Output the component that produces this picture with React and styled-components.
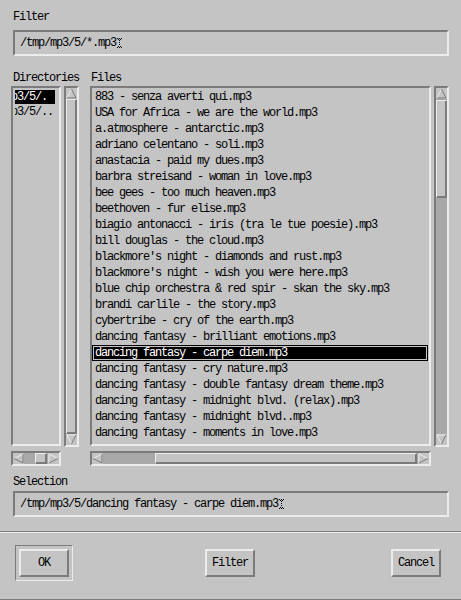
import React from "react";
import styled, { createGlobalStyle } from "styled-components";

const GRAY = "#c4c4c4";
const DARK = "#7b7b7b";
const LIGHT = "#ececec";
const TROUGH = "#a8a8a8";

const GlobalStyle = createGlobalStyle`
  html, body {
    margin: 0;
    padding: 0;
    background: ${GRAY};
  }
  body {
    font-family: "Liberation Mono", "DejaVu Sans Mono", monospace;
    font-size: 12px;
    letter-spacing: -1.2px;
    color: #000;
  }
`;

const Window = styled.div`
  width: 461px;
  height: 600px;
  box-sizing: border-box;
  display: flex;
  flex-direction: column;
  background: ${GRAY};
  overflow: hidden;
`;

const Top = styled.div`
  padding: 9px 12px 0 13px;
`;

const Label = styled.div`
  height: 16px;
  line-height: 16px;
  padding-left: ${(p) => p.$indent || 0}px;
  margin-top: ${(p) => p.$top || 0}px;
  white-space: nowrap;
`;

const Field = styled.div`
  height: 26px;
  box-sizing: border-box;
  margin-top: ${(p) => p.$gap || 0}px;
  border: 2px solid;
  border-color: ${DARK} ${LIGHT} ${LIGHT} ${DARK};
  padding-left: 5px;
  line-height: 22px;
  white-space: nowrap;
  display: flex;
  align-items: center;
`;

const Panels = styled.div`
  display: grid;
  grid-template-columns: 68px 359px;
  column-gap: 11px;
  padding: 14px 0 0 11px;
`;

const Panel = styled.div`
  display: grid;
  grid-template-columns: 1fr 15px;
  grid-template-rows: 16px 361px 15px;
  column-gap: 3px;
  & > ${Label} {
    grid-column: 1 / 3;
  }
`;

const List = styled.div`
  box-sizing: border-box;
  height: 360px;
  border: 2px solid;
  border-color: ${DARK} ${LIGHT} ${LIGHT} ${DARK};
  padding-top: 1px;
  overflow: hidden;
`;

const FileRow = styled.div`
  height: 16px;
  line-height: 16px;
  padding-left: 3px;
  margin-right: 1px;
  white-space: nowrap;
  overflow: hidden;
  ${(p) =>
    p.$selected &&
    `
    background: #000;
    color: #fff;
    box-shadow: inset 0 0 0 1px #000, inset 0 0 0 2px ${GRAY};
  `}
`;

const DirRow = styled.div`
  height: 14px;
  line-height: 14px;
  margin: 1px 4px 1px 2px;
  white-space: nowrap;
  overflow: hidden;
  ${(p) => p.$selected && `background: #000; color: #fff;`}
`;

const DirText = styled.span`
  display: inline-block;
  margin-left: -40px;
`;

const HScrollSlot = styled.div`
  grid-column: 1 / 2;
  margin-top: 4px;
`;

/* ---------- scrollbars ---------- */

const Trough = styled.div`
  box-sizing: border-box;
  width: ${(p) => (p.$vertical ? "15px" : "auto")};
  height: ${(p) => (p.$vertical ? "361px" : "15px")};
  border: 2px solid;
  border-color: ${DARK} ${LIGHT} ${LIGHT} ${DARK};
  background: ${TROUGH};
  display: flex;
  flex-direction: ${(p) => (p.$vertical ? "column" : "row")};
`;

const Track = styled.div`
  flex: 1;
  display: flex;
  flex-direction: ${(p) => (p.$vertical ? "column" : "row")};
`;

const Thumb = styled.div`
  box-sizing: border-box;
  flex: ${(p) => (p.$fill ? 1 : "none")};
  ${(p) =>
    p.$vertical
      ? `margin-top: ${p.$start}px; height: ${p.$fill ? "auto" : p.$size + "px"};`
      : `margin-left: ${p.$start}px; width: ${p.$fill ? "auto" : p.$size + "px"};`}
  background: ${GRAY};
  border: 1px solid;
  border-color: ${LIGHT} ${DARK} ${DARK} ${LIGHT};
  box-shadow: inset -1px -1px 0 ${DARK};
`;

const ArrowBox = styled.svg`
  flex: none;
  display: block;
  background: ${GRAY};
`;

const Arrow = ({ dir }) => {
  const pts = {
    up: [[5.5, 1], [10, 10], [1, 10]],
    down: [[1, 1], [10, 1], [5.5, 10]],
    left: [[1, 5.5], [10, 1], [10, 10]],
    right: [[1, 1], [10, 5.5], [1, 10]],
  }[dir];
  const p = pts.map((q) => q.join(",")).join(" ");
  return (
    <ArrowBox width={11} height={11} viewBox="0 0 11 11">
      <polygon points={p} fill={GRAY} />
      {dir === "up" && (
        <>
          <line x1="5.5" y1="1" x2="1" y2="10" stroke={LIGHT} />
          <line x1="5.5" y1="1" x2="10" y2="10" stroke={DARK} />
          <line x1="1" y1="10" x2="10" y2="10" stroke={DARK} />
        </>
      )}
      {dir === "down" && (
        <>
          <line x1="1" y1="1" x2="10" y2="1" stroke={LIGHT} />
          <line x1="1" y1="1" x2="5.5" y2="10" stroke={LIGHT} />
          <line x1="10" y1="1" x2="5.5" y2="10" stroke={DARK} />
        </>
      )}
      {dir === "left" && (
        <>
          <line x1="1" y1="5.5" x2="10" y2="1" stroke={LIGHT} />
          <line x1="1" y1="5.5" x2="10" y2="10" stroke={DARK} />
          <line x1="10" y1="1" x2="10" y2="10" stroke={DARK} />
        </>
      )}
      {dir === "right" && (
        <>
          <line x1="1" y1="1" x2="1" y2="10" stroke={LIGHT} />
          <line x1="1" y1="1" x2="10" y2="5.5" stroke={LIGHT} />
          <line x1="1" y1="10" x2="10" y2="5.5" stroke={DARK} />
        </>
      )}
    </ArrowBox>
  );
};

const ScrollBar = ({ vertical, start = 0, size = 0, fill }) => (
  <Trough $vertical={vertical}>
    <Arrow dir={vertical ? "up" : "left"} />
    <Track $vertical={vertical}>
      <Thumb $vertical={vertical} $start={start} $size={size} $fill={fill} />
    </Track>
    <Arrow dir={vertical ? "down" : "right"} />
  </Trough>
);

/* ---------- caret ---------- */

const CaretSvg = styled.svg`
  display: inline-block;
  margin-left: 1px;
  vertical-align: middle;
`;

const Caret = () => (
  <CaretSvg width="6" height="12" viewBox="0 0 6 12">
    <g fill="#000">
      <rect x="0" y="1" width="1" height="1" />
      <rect x="2" y="1" width="1" height="1" />
      <rect x="4" y="1" width="1" height="1" />
      <rect x="1" y="2" width="1" height="1" />
      <rect x="3" y="2" width="1" height="1" />
      <rect x="2" y="3" width="1" height="1" />
      <rect x="2" y="5" width="1" height="1" />
      <rect x="2" y="7" width="1" height="1" />
      <rect x="1" y="9" width="1" height="1" />
      <rect x="3" y="9" width="1" height="1" />
      <rect x="0" y="10" width="1" height="1" />
      <rect x="2" y="10" width="1" height="1" />
      <rect x="4" y="10" width="1" height="1" />
    </g>
  </CaretSvg>
);

/* ---------- bottom area ---------- */

const Bottom = styled.div`
  padding: 0 12px 0 13px;
`;

const Separator = styled.div`
  margin-top: 14px;
  height: 1px;
  background: ${DARK};
  border-bottom: 1px solid ${LIGHT};
`;

const ButtonBar = styled.div`
  flex: 1;
  display: flex;
  justify-content: space-between;
  align-items: flex-start;
  padding: 12px 16px 0 15px;
  border-left: 1px solid ${DARK};
  border-bottom: 1px solid ${DARK};
  margin-left: -1px;
`;

const ButtonSlot = styled.div`
  box-sizing: border-box;
  width: 58px;
  height: 36px;
  padding: 3px;
  border: 1px solid;
  border-color: ${(p) =>
    p.$default ? `${DARK} ${LIGHT} ${LIGHT} ${DARK}` : "transparent"};
`;

const Button = styled.button`
  box-sizing: border-box;
  width: 50px;
  height: 28px;
  margin: 0;
  padding: 0;
  background: ${GRAY};
  border: 2px solid;
  border-color: ${LIGHT} ${DARK} ${DARK} ${LIGHT};
  font: inherit;
  letter-spacing: inherit;
  color: #000;
`;

const files = [
  "883 - senza averti qui.mp3",
  "USA for Africa - we are the world.mp3",
  "a.atmosphere - antarctic.mp3",
  "adriano celentano - soli.mp3",
  "anastacia - paid my dues.mp3",
  "barbra streisand - woman in love.mp3",
  "bee gees - too much heaven.mp3",
  "beethoven - fur elise.mp3",
  "biagio antonacci - iris (tra le tue poesie).mp3",
  "bill douglas - the cloud.mp3",
  "blackmore's night - diamonds and rust.mp3",
  "blackmore's night - wish you were here.mp3",
  "blue chip orchestra & red spir - skan the sky.mp3",
  "brandi carlile - the story.mp3",
  "cybertribe - cry of the earth.mp3",
  "dancing fantasy - brilliant emotions.mp3",
  "dancing fantasy - carpe diem.mp3",
  "dancing fantasy - cry nature.mp3",
  "dancing fantasy - double fantasy dream theme.mp3",
  "dancing fantasy - midnight blvd. (relax).mp3",
  "dancing fantasy - midnight blvd..mp3",
  "dancing fantasy - moments in love.mp3",
];

const dirs = ["/tmp/mp3/5/.", "/tmp/mp3/5/.."];

export default function App() {
  const selected = "dancing fantasy - carpe diem.mp3";
  return (
    <>
      <GlobalStyle />
      <Window>
        <Top>
          <Label>Filter</Label>
          <Field $gap={5}>
            /tmp/mp3/5/*.mp3
            <Caret />
          </Field>
        </Top>

        <Panels>
          <Panel>
            <Label $indent={2}>Directories</Label>
            <List>
              {dirs.map((d, i) => (
                <DirRow key={d} $selected={i === 0}>
                  <DirText>{d}</DirText>
                </DirRow>
              ))}
            </List>
            <ScrollBar vertical fill />
            <HScrollSlot>
              <ScrollBar start={11} size={12} />
            </HScrollSlot>
          </Panel>

          <Panel>
            <Label $indent={1}>Files</Label>
            <List>
              {files.map((f) => (
                <FileRow key={f} $selected={f === selected}>
                  {f}
                </FileRow>
              ))}
            </List>
            <ScrollBar vertical start={1} size={98} />
            <HScrollSlot>
              <ScrollBar start={52} size={262} />
            </HScrollSlot>
          </Panel>
        </Panels>

        <Bottom>
          <Label $top={12}>Selection</Label>
          <Field $gap={1}>
            /tmp/mp3/5/dancing fantasy - carpe diem.mp3
            <Caret />
          </Field>
        </Bottom>

        <Separator />

        <ButtonBar>
          <ButtonSlot $default>
            <Button>OK</Button>
          </ButtonSlot>
          <ButtonSlot>
            <Button>Filter</Button>
          </ButtonSlot>
          <ButtonSlot>
            <Button>Cancel</Button>
          </ButtonSlot>
        </ButtonBar>
      </Window>
    </>
  );
}
